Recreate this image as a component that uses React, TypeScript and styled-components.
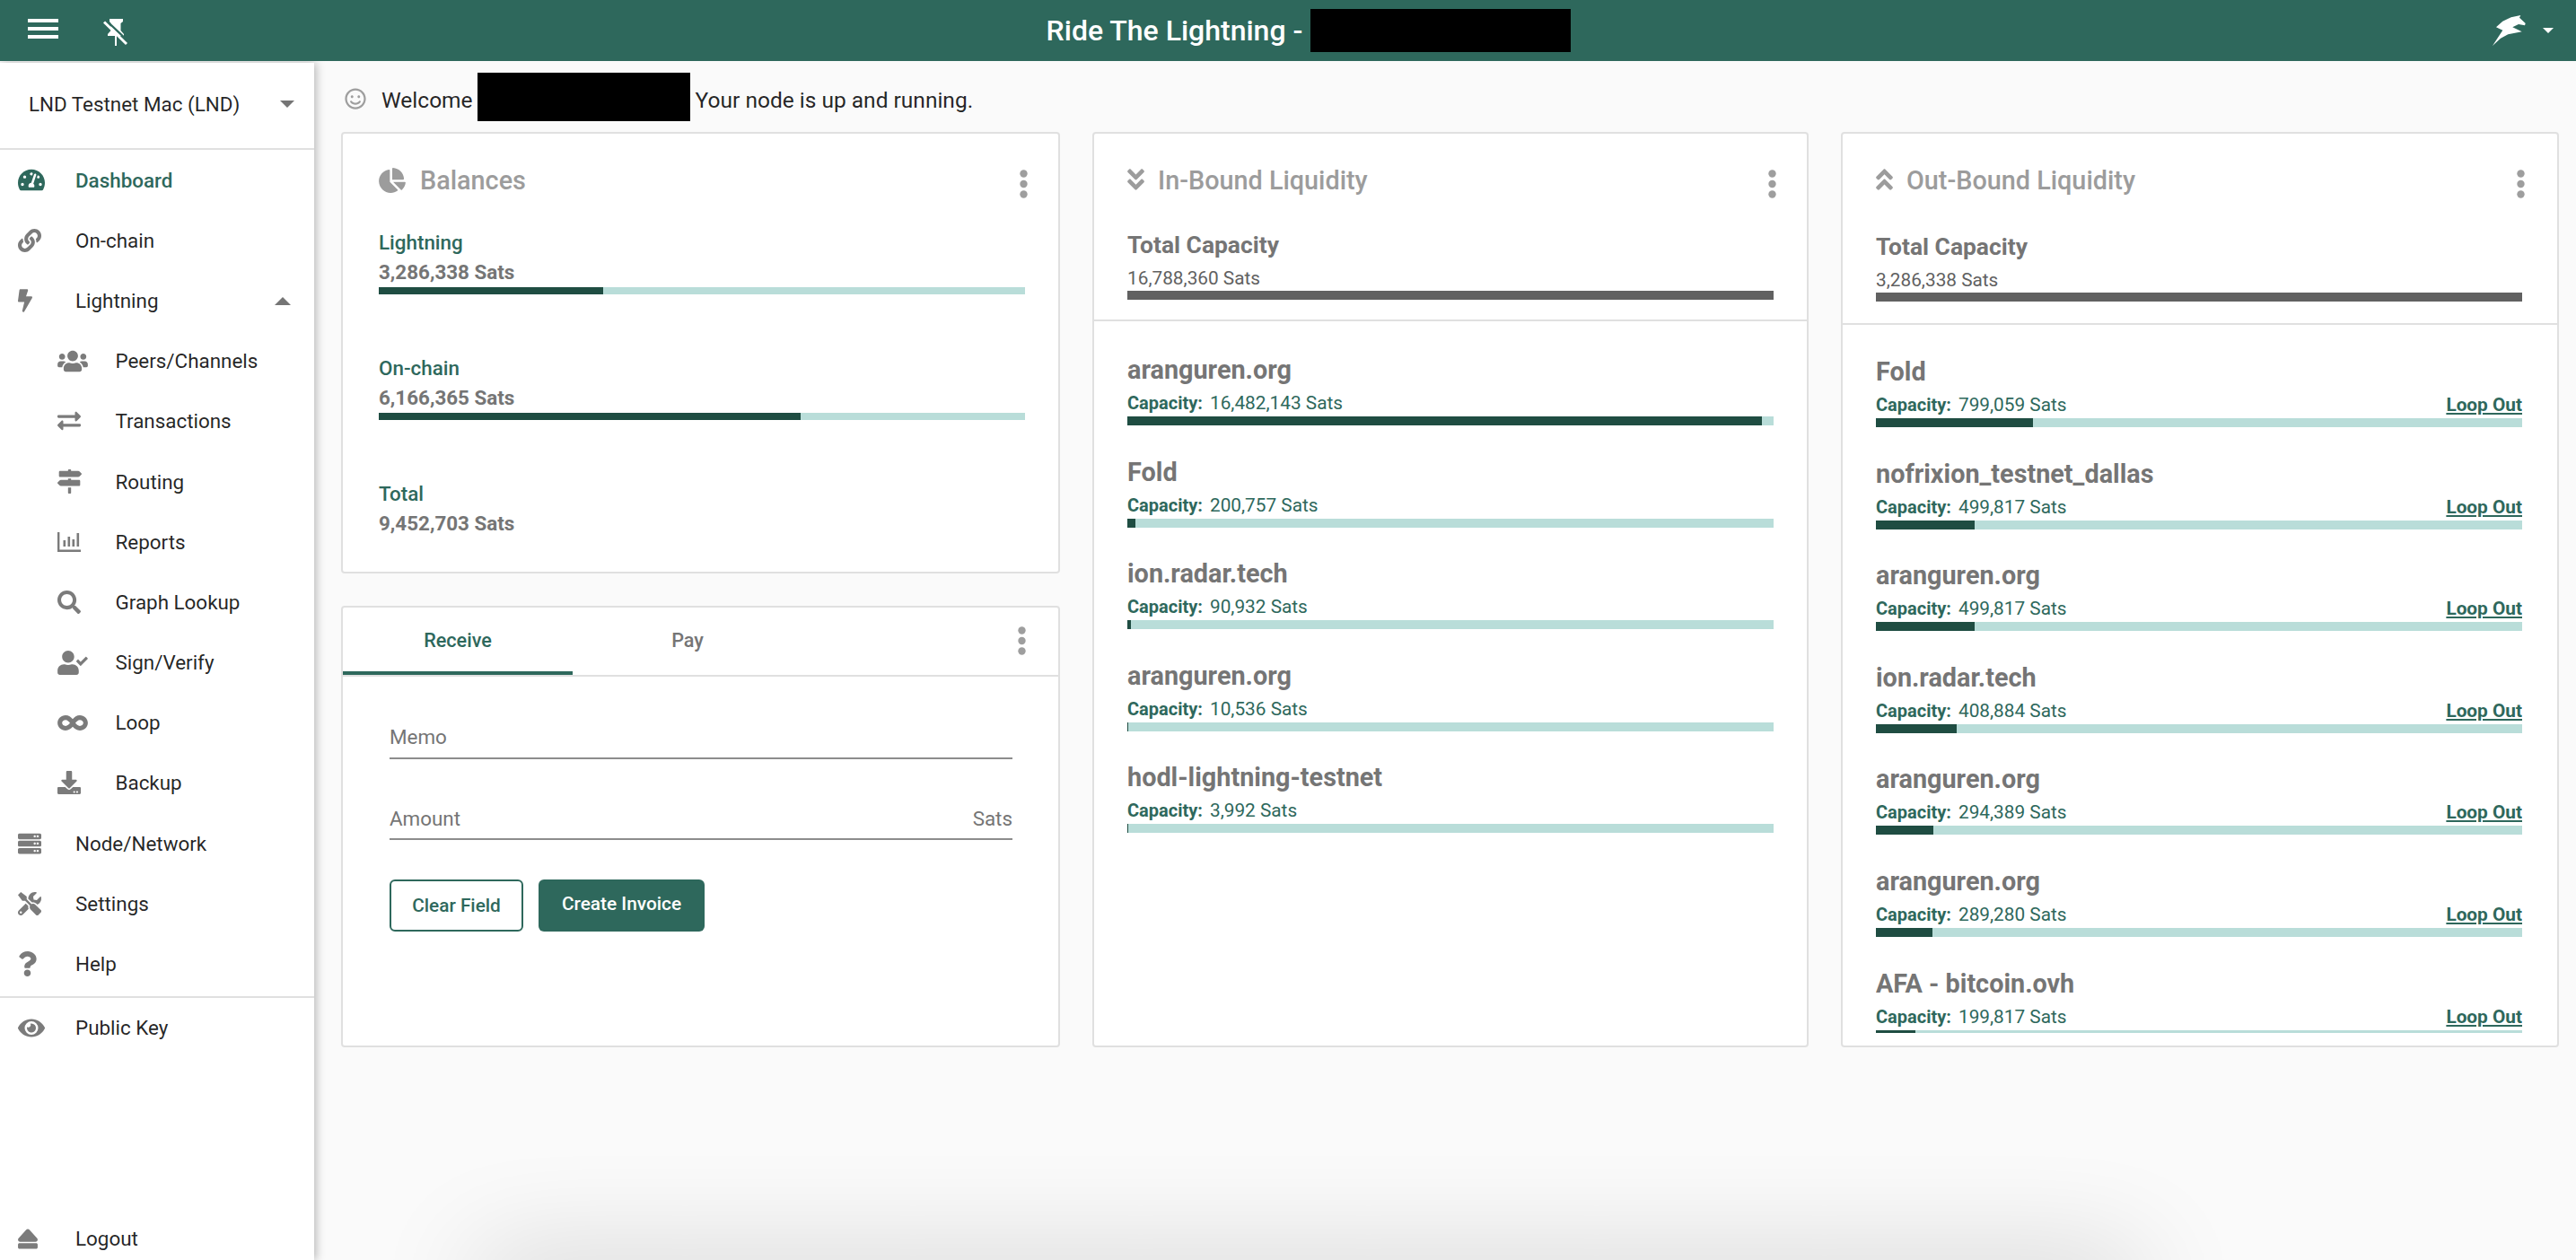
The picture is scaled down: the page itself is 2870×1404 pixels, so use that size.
import React from "react";
import styled, { createGlobalStyle } from "styled-components";
import {
  FaTachometerAlt,
  FaLink,
  FaBolt,
  FaUsers,
  FaExchangeAlt,
  FaMapSigns,
  FaSearch,
  FaUserCheck,
  FaInfinity,
  FaDownload,
  FaServer,
  FaTools,
  FaQuestion,
  FaEye,
  FaEject,
  FaChartPie,
  FaAngleDoubleDown,
  FaAngleDoubleUp,
  FaRegSmile,
} from "react-icons/fa";

const GREEN = "#2e685c";
const DARK_FILL = "#1f4d42";
const TRACK = "#b9ddd9";

const GlobalStyle = createGlobalStyle`
  html, body {
    margin: 0;
    height: 100%;
    background: #fafafa;
    overflow: hidden;
  }
  * {
    box-sizing: border-box;
  }
  body {
    font-family: Roboto, "Liberation Sans", sans-serif;
  }
`;

const Page = styled.div`
  width: 2870px;
  height: 1404px;
  display: flex;
  flex-direction: column;
  overflow: hidden;
  position: relative;
`;

const Toolbar = styled.header`
  height: 68px;
  flex: none;
  background: ${GREEN};
  display: flex;
  align-items: center;
  justify-content: space-between;
  padding: 0 25px 0 31px;
  position: relative;
  z-index: 3;
`;

const ToolLeft = styled.div`
  display: flex;
  align-items: center;
  gap: 50px;
  width: 340px;
`;

const MenuSvg = styled.svg`
  margin-top: -4px;
`;

const PinSvg = styled.svg`
  margin-top: 4px;
`;

const ToolTitle = styled.div`
  display: flex;
  align-items: center;
  gap: 9px;
  color: #fff;
  font-size: 32px;
  font-weight: 500;
`;

const Redacted = styled.span<{ $w: number; $h: number }>`
  display: inline-block;
  flex: none;
  width: ${(p) => p.$w}px;
  height: ${(p) => p.$h}px;
  background: #000;
`;

const ToolRight = styled.div`
  width: 300px;
  display: flex;
  justify-content: flex-end;
  align-items: center;
  gap: 19px;
`;

const Caret = styled.span<{ $color: string; $up?: boolean; $size?: number }>`
  display: inline-block;
  flex: none;
  width: 0;
  height: 0;
  border-left: ${(p) => p.$size ?? 8}px solid transparent;
  border-right: ${(p) => p.$size ?? 8}px solid transparent;
  ${(p) => (p.$up ? "border-bottom" : "border-top")}: ${(p) => p.$size ?? 8}px solid ${(p) => p.$color};
`;

const Body = styled.div`
  flex: 1;
  display: flex;
  min-height: 0;
`;

const Sidebar = styled.aside`
  width: 350px;
  flex: none;
  margin-top: 2px;
  background: #fff;
  box-shadow: 2px 0 10px rgba(0, 0, 0, 0.28);
  display: flex;
  flex-direction: column;
  position: relative;
  z-index: 2;
`;

const NodeSelect = styled.div`
  height: 97px;
  flex: none;
  display: flex;
  align-items: center;
  justify-content: space-between;
  padding: 0 22px 3px 32px;
  border-bottom: 2px solid #e0e0e0;
  font-size: 22.4px;
  color: rgba(0, 0, 0, 0.87);
`;

const NavRow = styled.div<{ $sub?: boolean; $active?: boolean }>`
  height: 67.2px;
  flex: none;
  display: flex;
  align-items: center;
  padding-left: ${(p) => (p.$sub ? 64 : 20)}px;
  font-size: 22.4px;
  font-weight: ${(p) => (p.$active ? 500 : 400)};
  color: ${(p) => (p.$active ? GREEN : "rgba(0,0,0,0.87)")};
  position: relative;
`;

const NavIcon = styled.span<{ $sub?: boolean; $active?: boolean; $iw: number; $ih: number }>`
  width: ${(p) => (p.$sub ? 64.5 : 64)}px;
  flex: none;
  display: flex;
  align-items: center;
  color: ${(p) => (p.$active ? GREEN : "#7b7b7b")};

  svg {
    width: ${(p) => p.$iw}px;
    height: ${(p) => p.$ih}px;
  }
`;

const NavCaret = styled.span`
  position: absolute;
  right: 26px;
  top: 30px;
  display: flex;
`;

const NavDivider = styled.div`
  height: 2px;
  flex: none;
  margin-top: 2px;
  background: #e0e0e0;
`;

const LogoutRow = styled(NavRow)`
  height: 48px;
  margin-top: auto;
`;

const Content = styled.main`
  flex: 1;
  min-width: 0;
  padding: 13px 19px 0 30px;
`;

const Welcome = styled.div`
  height: 54px;
  padding-top: 6px;
  display: flex;
  align-items: center;
  font-size: 24.5px;
  color: rgba(0, 0, 0, 0.87);
  margin-bottom: 12px;
`;

const WelcomeIcon = styled.span`
  display: flex;
  color: #9e9e9e;
  margin: 0 17px 2px 4px;
`;

const WelcomeGap = styled.span`
  margin: -6px 6px 0 5px;
  display: flex;
`;

const Grid = styled.div`
  display: grid;
  grid-template-columns: 801px 798px 800px;
  gap: 36px;
  height: 1020px;
`;

const Column = styled.div`
  display: grid;
  grid-template-rows: 1fr 1fr;
  gap: 36px;
  min-height: 0;
`;

const Card = styled.section<{ $pl: number; $pr: number }>`
  --pl: ${(p) => p.$pl}px;
  --pr: ${(p) => p.$pr}px;
  background: #fff;
  border: 2px solid #e0e0e0;
  border-radius: 4px;
  min-height: 0;
  display: flex;
  flex-direction: column;
  overflow: hidden;
`;

const CardHeader = styled.div`
  height: 104px;
  flex: none;
  display: flex;
  align-items: center;
  justify-content: space-between;
  padding: 0 var(--pr) 0 var(--pl);
`;

const CardTitle = styled.div`
  display: flex;
  align-items: center;
  color: #9c9c9c;
  font-size: 28.8px;
  font-weight: 500;
`;

const TitleIcon = styled.span<{ $w: number; $iw: number; $ih: number }>`
  width: ${(p) => p.$w}px;
  display: flex;
  align-items: center;

  svg {
    width: ${(p) => p.$iw}px;
    height: ${(p) => p.$ih}px;
  }
`;

const AngleIcon = styled(TitleIcon)`
  margin-top: -2px;
`;

const Dots = styled.svg`
  display: block;
  flex: none;
  width: 9px;
  height: 32px;
  margin-top: 8px;
  margin-right: -3px;
  fill: #9e9e9e;
`;

const MoreDots = () => (
  <Dots viewBox="0 0 9 32">
    <circle cx="4.5" cy="4.5" r="4.2" />
    <circle cx="4.5" cy="16" r="4.2" />
    <circle cx="4.5" cy="27.5" r="4.2" />
  </Dots>
);

const BalanceList = styled.div`
  padding: 1px var(--pr) 0 var(--pl);
`;

const BalanceBlock = styled.div`
  height: 140px;
`;

const BalanceLabel = styled.div`
  height: 32px;
  line-height: 32px;
  font-size: 22.4px;
  font-weight: 500;
  color: ${GREEN};
`;

const BalanceValue = styled.div`
  height: 32px;
  line-height: 34px;
  font-size: 22.4px;
  font-weight: 700;
  color: #757575;
`;

const Track = styled.div<{ $h: number; $mt?: number }>`
  height: ${(p) => p.$h}px;
  margin-top: ${(p) => p.$mt ?? 0}px;
  background: ${TRACK};
  flex: none;
`;

const Fill = styled.div`
  height: 100%;
  background: ${DARK_FILL};
`;

const TabBar = styled.div`
  height: 77px;
  flex: none;
  display: flex;
  align-items: stretch;
  border-bottom: 2px solid #e0e0e0;
  padding-right: 39px;
`;

const Tab = styled.div<{ $active?: boolean }>`
  width: 256px;
  display: flex;
  align-items: center;
  justify-content: center;
  padding-bottom: 3px;
  font-size: 21.6px;
  font-weight: 500;
  color: ${(p) => (p.$active ? GREEN : "#757575")};
  position: relative;
  ${(p) =>
    p.$active &&
    `&::after {
      content: "";
      position: absolute;
      left: 0;
      right: 0;
      bottom: 0;
      height: 4px;
      background: ${GREEN};
    }`}
`;

const TabDots = styled.div`
  margin-left: auto;
  display: flex;
  align-items: center;
  padding-bottom: 10px;
`;

const FormBody = styled.div`
  padding: 0 51px 0 52px;
`;

const Field = styled.div<{ $mt: number; $pb: number }>`
  height: 45px;
  margin-top: ${(p) => p.$mt}px;
  display: flex;
  align-items: center;
  justify-content: space-between;
  border-bottom: 2px solid #8c8c8c;
  font-size: 22.4px;
  color: #757575;
  padding-bottom: ${(p) => p.$pb}px;
`;

const Buttons = styled.div`
  display: flex;
  gap: 17px;
  margin-top: 44px;
`;

const OutlineButton = styled.button`
  width: 149px;
  height: 58px;
  font: 500 20.8px Roboto, sans-serif;
  color: ${GREEN};
  background: #fff;
  border: 2px solid ${GREEN};
  border-radius: 6px;
  padding: 0;
`;

const SolidButton = styled.button`
  width: 185px;
  height: 58px;
  font: 500 20.8px Roboto, sans-serif;
  color: #fff;
  background: ${GREEN};
  border: none;
  border-radius: 6px;
  padding: 0 0 4px;
`;

const TotalBlock = styled.div<{ $pt: number; $pb: number }>`
  padding: ${(p) => p.$pt}px var(--pr) ${(p) => p.$pb}px var(--pl);
  border-bottom: 2px solid #e0e0e0;
  flex: none;
`;

const TotalLabel = styled.div`
  height: 36px;
  line-height: 36px;
  font-size: 26.4px;
  font-weight: 700;
  color: #757575;
`;

const TotalValue = styled.div`
  height: 28px;
  margin-top: 5px;
  line-height: 28px;
  font-size: 20.8px;
  color: #616161;
`;

const GrayTrack = styled.div`
  height: 10px;
  background: #616161;
`;

const ChannelList = styled.div<{ $pt: number }>`
  flex: 1;
  min-height: 0;
  margin: 0 var(--pr) 14px var(--pl);
  padding-top: ${(p) => p.$pt}px;
  overflow: hidden;
`;

const ChannelRow = styled.div`
  height: 113.6px;
`;

const ChannelName = styled.div`
  height: 40px;
  line-height: 40px;
  font-size: 28.8px;
  font-weight: 700;
  color: #757575;
`;

const CapacityLine = styled.div`
  height: 28px;
  margin-top: 3px;
  line-height: 28px;
  display: flex;
  align-items: center;
  font-size: 20.8px;
  color: ${GREEN};
`;

const CapacityKey = styled.b`
  font-size: 20px;
  font-weight: 700;
  margin-right: 8px;
`;

const LoopOut = styled.a`
  margin-left: auto;
  font-weight: 700;
  color: ${GREEN};
  text-decoration: underline;
`;

const BottomShadow = styled.div`
  position: absolute;
  left: 532px;
  top: 1404px;
  width: 1852px;
  height: 60px;
  box-shadow: 0 0 120px rgba(0, 0, 0, 0.2);
`;

const ReportsIcon = () => (
  <svg viewBox="0 0 26 22" fill="currentColor">
    <path d="M0 0h2.4v19.4H26V22H0z" />
    <rect x="6.5" y="9" width="2.6" height="7" />
    <rect x="11.5" y="5" width="2.6" height="11" />
    <rect x="16.5" y="8" width="2.6" height="8" />
    <rect x="21.5" y="1" width="2.6" height="15" />
  </svg>
);

const nav = [
  { label: "Dashboard", Icon: FaTachometerAlt, iw: 30, ih: 27, active: true },
  { label: "On-chain", Icon: FaLink, iw: 26, ih: 26 },
  { label: "Lightning", Icon: FaBolt, iw: 16, ih: 26, open: true },
  { label: "Peers/Channels", Icon: FaUsers, iw: 34, ih: 27, sub: true },
  { label: "Transactions", Icon: FaExchangeAlt, iw: 26, ih: 26, sub: true },
  { label: "Routing", Icon: FaMapSigns, iw: 27, ih: 27, sub: true },
  { label: "Reports", Icon: ReportsIcon, iw: 26, ih: 22, sub: true },
  { label: "Graph Lookup", Icon: FaSearch, iw: 26, ih: 26, sub: true },
  { label: "Sign/Verify", Icon: FaUserCheck, iw: 34, ih: 27, sub: true },
  { label: "Loop", Icon: FaInfinity, iw: 34, ih: 27, sub: true },
  { label: "Backup", Icon: FaDownload, iw: 26, ih: 26, sub: true },
  { label: "Node/Network", Icon: FaServer, iw: 26, ih: 26 },
  { label: "Settings", Icon: FaTools, iw: 26, ih: 26 },
  { label: "Help", Icon: FaQuestion, iw: 21, ih: 28 },
];

const inbound = [
  { name: "aranguren.org", cap: 16482143 },
  { name: "Fold", cap: 200757 },
  { name: "ion.radar.tech", cap: 90932 },
  { name: "aranguren.org", cap: 10536 },
  { name: "hodl-lightning-testnet", cap: 3992 },
];

const outbound = [
  { name: "Fold", cap: 799059 },
  { name: "nofrixion_testnet_dallas", cap: 499817 },
  { name: "aranguren.org", cap: 499817 },
  { name: "ion.radar.tech", cap: 408884 },
  { name: "aranguren.org", cap: 294389 },
  { name: "aranguren.org", cap: 289280 },
  { name: "AFA - bitcoin.ovh", cap: 199817 },
];

const balances = [
  { label: "Lightning", value: 3286338, pct: 34.75 },
  { label: "On-chain", value: 6166365, pct: 65.25 },
  { label: "Total", value: 9452703 },
];

const fmt = (n: number) => n.toLocaleString("en-US");

const Channels = ({ rows, total, loop }: { rows: typeof inbound; total: number; loop?: boolean }) => (
  <>
    {rows.map((r, i) => (
      <ChannelRow key={i}>
        <ChannelName>{r.name}</ChannelName>
        <CapacityLine>
          <CapacityKey>Capacity:</CapacityKey>
          {fmt(r.cap)} Sats
          {loop && <LoopOut>Loop Out</LoopOut>}
        </CapacityLine>
        <Track $h={10} $mt={1}>
          <Fill style={{ width: `${(r.cap / total) * 100}%` }} />
        </Track>
      </ChannelRow>
    ))}
  </>
);

const UnpinIcon = () => (
  <PinSvg width="27" height="30" viewBox="0 0 27 30" fill="#fff">
    <path d="M7 0H22V3L19.5 5V13L23 17V19H15V30H13V19H5V17L8.5 13V5L7 3Z" />
    <path d="M3 1.5 28 25" stroke={GREEN} strokeWidth="2.4" fill="none" />
    <path d="M1 3.5 26 28" stroke="#fff" strokeWidth="3" fill="none" />
  </PinSvg>
);

const MenuIcon = () => (
  <MenuSvg width="34" height="22" viewBox="0 0 34 22" fill="#fff">
    <rect y="0" width="34" height="4" />
    <rect y="9" width="34" height="4" />
    <rect y="18" width="34" height="4" />
  </MenuSvg>
);

const BoltHorseLogo = () => (
  <svg width="37" height="34" viewBox="0 0 37 34" fill="#fff">
    <path d="M0 34 11.3 16.7 4 13.3 11.3 6.7 20.7 2.3 31.3 0 30 2.7 36.7 9 36 11.3 29 10 22.3 13.3 32.7 18.3 17.3 21.3 9 25.7Z" />
  </svg>
);

export default function App() {
  return (
    <Page>
      <GlobalStyle />
      <Toolbar>
        <ToolLeft>
          <MenuIcon />
          <UnpinIcon />
        </ToolLeft>
        <ToolTitle>
          Ride The Lightning -
          <Redacted $w={290} $h={48} />
        </ToolTitle>
        <ToolRight>
          <BoltHorseLogo />
          <Caret $color="#fff" $size={6.5} />
        </ToolRight>
      </Toolbar>
      <Body>
        <Sidebar>
          <NodeSelect>
            LND Testnet Mac (LND)
            <Caret $color="#757575" />
          </NodeSelect>
          {nav.map(({ label, Icon, iw, ih, active, sub, open }) => (
            <NavRow key={label} $sub={sub} $active={active}>
              <NavIcon $sub={sub} $active={active} $iw={iw} $ih={ih}>
                <Icon />
              </NavIcon>
              {label}
              {open && (
                <NavCaret>
                  <Caret $color="#757575" $up $size={9} />
                </NavCaret>
              )}
            </NavRow>
          ))}
          <NavDivider />
          <NavRow>
            <NavIcon $iw={30} $ih={27}>
              <FaEye />
            </NavIcon>
            Public Key
          </NavRow>
          <LogoutRow>
            <NavIcon $iw={22} $ih={25}>
              <FaEject />
            </NavIcon>
            Logout
          </LogoutRow>
        </Sidebar>
        <Content>
          <Welcome>
            <WelcomeIcon>
              <FaRegSmile size={24} />
            </WelcomeIcon>
            Welcome
            <WelcomeGap>
              <Redacted $w={237} $h={54} />
            </WelcomeGap>
            Your node is up and running.
          </Welcome>
          <Grid>
            <Column>
              <Card $pl={40} $pr={37}>
                <CardHeader>
                  <CardTitle>
                    <TitleIcon $w={46} $iw={30} $ih={28}>
                      <FaChartPie />
                    </TitleIcon>
                    Balances
                  </CardTitle>
                  <MoreDots />
                </CardHeader>
                <BalanceList>
                  {balances.map((b) => (
                    <BalanceBlock key={b.label}>
                      <BalanceLabel>{b.label}</BalanceLabel>
                      <BalanceValue>{fmt(b.value)} Sats</BalanceValue>
                      {b.pct && (
                        <Track $h={8} $mt={2}>
                          <Fill style={{ width: `${b.pct}%` }} />
                        </Track>
                      )}
                    </BalanceBlock>
                  ))}
                </BalanceList>
              </Card>
              <Card $pl={40} $pr={37}>
                <TabBar>
                  <Tab $active>Receive</Tab>
                  <Tab>Pay</Tab>
                  <TabDots>
                    <MoreDots />
                  </TabDots>
                </TabBar>
                <FormBody>
                  <Field $mt={47} $pb={4}>
                    Memo
                  </Field>
                  <Field $mt={45} $pb={1}>
                    Amount
                    <span>Sats</span>
                  </Field>
                  <Buttons>
                    <OutlineButton>Clear Field</OutlineButton>
                    <SolidButton>Create Invoice</SolidButton>
                  </Buttons>
                </FormBody>
              </Card>
            </Column>
            <Card $pl={37} $pr={37}>
              <CardHeader>
                <CardTitle>
                  <AngleIcon $w={34} $iw={19} $ih={30}>
                    <FaAngleDoubleDown />
                  </AngleIcon>
                  In-Bound Liquidity
                </CardTitle>
                <MoreDots />
              </CardHeader>
              <TotalBlock $pt={2} $pb={22}>
                <TotalLabel>Total Capacity</TotalLabel>
                <TotalValue>16,788,360 Sats</TotalValue>
                <GrayTrack />
              </TotalBlock>
              <ChannelList $pt={34}>
                <Channels rows={inbound} total={16788360} />
              </ChannelList>
            </Card>
            <Card $pl={37} $pr={39}>
              <CardHeader>
                <CardTitle>
                  <AngleIcon $w={34} $iw={19} $ih={30}>
                    <FaAngleDoubleUp />
                  </AngleIcon>
                  Out-Bound Liquidity
                </CardTitle>
                <MoreDots />
              </CardHeader>
              <TotalBlock $pt={4} $pb={24}>
                <TotalLabel>Total Capacity</TotalLabel>
                <TotalValue>3,286,338 Sats</TotalValue>
                <GrayTrack />
              </TotalBlock>
              <ChannelList $pt={32}>
                <Channels rows={outbound} total={3286338} loop />
              </ChannelList>
            </Card>
          </Grid>
        </Content>
      </Body>
      <BottomShadow />
    </Page>
  );
}
